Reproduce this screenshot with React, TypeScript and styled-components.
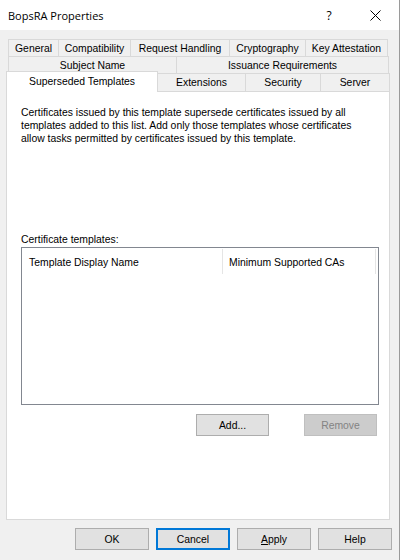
import React from "react";
import styled, { createGlobalStyle } from "styled-components";

const GlobalStyle = createGlobalStyle`
  html, body {
    margin: 0;
    padding: 0;
    background: #ffffff;
  }
  * {
    box-sizing: border-box;
  }
`;

const UI_FONT = `"Liberation Sans", Arial, sans-serif`;

const Window = styled.div`
  width: 400px;
  height: 560px;
  background: #f0f0f0;
  border-right: 1px solid #9a9a9a;
  display: flex;
  flex-direction: column;
  font-family: ${UI_FONT};
  font-size: 10.4px;
  color: #000;
`;

const TitleBar = styled.div`
  height: 30px;
  background: #ffffff;
  display: flex;
  align-items: center;
  padding-left: 8px;
  flex-shrink: 0;
`;

const Title = styled.span`
  font-family: "Open Sans", "Noto Sans", sans-serif;
  font-size: 11px;
  color: #000;
`;

const CaptionButtons = styled.div`
  margin-left: auto;
  display: flex;
  height: 100%;
  margin-right: 1px;
`;

const CaptionButton = styled.div`
  width: 46px;
  height: 100%;
  display: flex;
  align-items: center;
  justify-content: center;
  font-family: "Open Sans", "Noto Sans", sans-serif;
  font-size: 12px;
  color: #000;
`;

const Body = styled.div`
  flex: 1;
  display: flex;
  flex-direction: column;
  padding-top: 9px;
`;

const TabRow = styled.div<{ $offset: number }>`
  display: flex;
  align-items: flex-start;
  margin-left: ${(p) => p.$offset}px;
`;

const Tab = styled.div<{ $width: number; $height: number; $active?: boolean }>`
  width: ${(p) => p.$width}px;
  height: ${(p) => p.$height}px;
  border: 1px solid #d9d9d9;
  border-bottom: none;
  background: ${(p) => (p.$active ? "#ffffff" : "#f0f0f0")};
  display: flex;
  align-items: center;
  justify-content: center;
  white-space: nowrap;
  font-size: 10.4px;
  line-height: 1;
  padding-top: ${(p) => (p.$active ? 0 : 2)}px;
  position: relative;
  z-index: ${(p) => (p.$active ? 2 : 1)};
  margin-top: ${(p) => (p.$active ? -2 : 0)}px;
  margin-bottom: ${(p) => (p.$active ? -1 : 0)}px;

  & + & {
    margin-left: -1px;
  }
`;

const Panel = styled.div`
  margin-left: 6px;
  width: 384px;
  height: 429px;
  background: #ffffff;
  border: 1px solid #d9d9d9;
  padding: 14px 0 0 14px;
  display: flex;
  flex-direction: column;
  flex-shrink: 0;
`;

const Description = styled.p`
  margin: 0;
  width: 345px;
  line-height: 13px;
  font-size: 10.4px;
`;

const FieldLabel = styled.div`
  margin-top: 88px;
  line-height: 13px;
  height: 14px;
`;

const ListBox = styled.div`
  width: 358px;
  height: 158px;
  border: 1px solid #828790;
  background: #ffffff;
  padding-top: 1px;
`;

const ListHeader = styled.div`
  display: flex;
  height: 25px;
`;

const HeaderCell = styled.div<{ $width: number; $pad: number }>`
  width: ${(p) => p.$width}px;
  height: 100%;
  border-right: 1px solid #e5e5e5;
  padding-left: ${(p) => p.$pad}px;
  display: flex;
  align-items: center;
  padding-top: 1px;
  white-space: nowrap;
`;

const ListActions = styled.div`
  width: 358px;
  display: flex;
  justify-content: flex-end;
  gap: 35px;
  padding-right: 2px;
  margin-top: 9px;
`;

const Button = styled.button`
  width: 73px;
  height: 22px;
  background: #e1e1e1;
  border: 1px solid #adadad;
  font-family: ${UI_FONT};
  font-size: 10.4px;
  color: #000;
  padding: 1px 0 0;
  display: flex;
  align-items: center;
  justify-content: center;
  border-radius: 0;
  outline: none;

  &:disabled {
    background: #cccccc;
    border-color: #bfbfbf;
    color: #838383;
  }
`;

const DialogButton = styled(Button)<{ $focused?: boolean }>`
  width: 74px;
  border: ${(p) => (p.$focused ? "2px solid #0078d7" : "1px solid #adadad")};
`;

const Footer = styled.div`
  display: flex;
  justify-content: flex-end;
  gap: 7px;
  padding-right: 7px;
  margin-top: 8px;
`;

const Mnemonic = styled.span`
  text-decoration: underline;
`;

type TabSpec = { label: string; width: number; active?: boolean };

const tabRows: { offset: number; height: number; tabs: TabSpec[] }[] = [
  {
    offset: 8,
    height: 17,
    tabs: [
      { label: "General", width: 51 },
      { label: "Compatibility", width: 73 },
      { label: "Request Handling", width: 100 },
      { label: "Cryptography", width: 77 },
      { label: "Key Attestation", width: 83 },
    ],
  },
  {
    offset: 8,
    height: 17,
    tabs: [
      { label: "Subject Name", width: 169 },
      { label: "Issuance Requirements", width: 213 },
    ],
  },
  {
    offset: 6,
    height: 18,
    tabs: [
      { label: "Superseded Templates", width: 152, active: true },
      { label: "Extensions", width: 89 },
      { label: "Security", width: 76 },
      { label: "Server", width: 70 },
    ],
  },
];

const CloseIcon = () => (
  <svg width="11" height="11" viewBox="0 0 11 11">
    <path d="M0.5 0.5 L10.5 10.5 M10.5 0.5 L0.5 10.5" stroke="#000" strokeWidth="1" fill="none" />
  </svg>
);

export default function App() {
  return (
    <>
      <GlobalStyle />
      <Window>
        <TitleBar>
          <Title>BopsRA Properties</Title>
          <CaptionButtons>
            <CaptionButton>?</CaptionButton>
            <CaptionButton>
              <CloseIcon />
            </CaptionButton>
          </CaptionButtons>
        </TitleBar>
        <Body>
          {tabRows.map((row, i) => (
            <TabRow key={i} $offset={row.offset}>
              {row.tabs.map((t) => (
                <Tab
                  key={t.label}
                  $width={t.width}
                  $height={t.active ? row.height + 3 : row.height}
                  $active={t.active}
                >
                  {t.label}
                </Tab>
              ))}
            </TabRow>
          ))}
          <Panel>
            <Description>
              Certificates issued by this template supersede certificates issued by all
              templates added to this list. Add only those templates whose certificates
              allow tasks permitted by certificates issued by this template.
            </Description>
            <FieldLabel>Certificate templates:</FieldLabel>
            <ListBox>
              <ListHeader>
                <HeaderCell $width={201} $pad={7}>
                  Template Display Name
                </HeaderCell>
                <HeaderCell $width={153} $pad={6}>
                  Minimum Supported CAs
                </HeaderCell>
              </ListHeader>
            </ListBox>
            <ListActions>
              <Button>Add...</Button>
              <Button disabled>Remove</Button>
            </ListActions>
          </Panel>
          <Footer>
            <DialogButton>OK</DialogButton>
            <DialogButton $focused>Cancel</DialogButton>
            <DialogButton>
              <Mnemonic>A</Mnemonic>pply
            </DialogButton>
            <DialogButton>Help</DialogButton>
          </Footer>
        </Body>
      </Window>
    </>
  );
}
